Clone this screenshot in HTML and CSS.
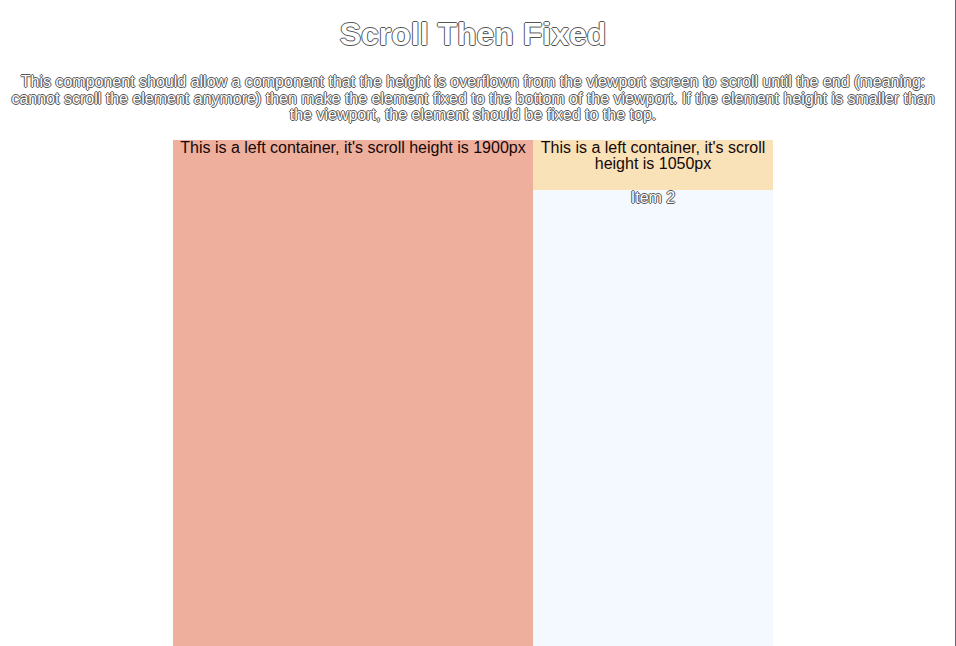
FILE: index.html
```html
<!DOCTYPE html>
<html>
<head>
<meta charset="utf-8">
<title>Scroll Then Fixed</title>
<link rel="stylesheet" href="styles.css">
</head>
<body>
<div class="frame">
  <div class="page">
    <h1 class="title outline">Scroll Then Fixed</h1>
    <p class="desc outline">This component should allow a component that the height is overflown from the viewport screen to scroll until the end (meaning: cannot scroll the element anymore) then make the element fixed to the bottom of the viewport. If the element height is smaller than the viewport, the element should be fixed to the top.</p>
    <div class="columns">
      <div class="left">This is a left container, it's scroll height is 1900px</div>
      <div class="right">
        <div class="right-head">This is a left container, it's scroll height is 1050px</div>
        <div class="right-item outline">Item 2</div>
      </div>
    </div>
  </div>
  <div class="edge"></div>
</div>
</body>
</html>
```

FILE: styles.css
```css
html, body {
  margin: 0;
  padding: 0;
  background: #fff;
}
body {
  font-family: "Liberation Sans", Arial, Helvetica, sans-serif;
}
.frame {
  display: flex;
  height: 646px;
  overflow: hidden;
}
.page {
  flex: 0 0 946px;
  text-align: center;
}
.edge {
  flex: 0 0 9px;
  border-right: 1px solid #6a6470;
}
.outline {
  color: #fff;
  text-shadow:
    -1px 0 0 #555, 1px 0 0 #555, 0 -1px 0 #555, 0 1px 0 #555;
}
.title {
  font-size: 32px;
  font-weight: bold;
  margin: 16px 0 0;
  line-height: 36px;
}
.desc {
  font-size: 16px;
  line-height: 16.5px;
  margin: 22px 8px 0;
}
.columns {
  display: flex;
  justify-content: center;
  margin-top: 16px;
}
.left {
  width: 360px;
  height: 1900px;
  background: #efaf9d;
  color: #150808;
  font-size: 16px;
  line-height: 16px;
}
.right {
  width: 240px;
  height: 1050px;
  background: #f3f9fe;
  display: flex;
  flex-direction: column;
}
.right-head {
  background: #f9e2b8;
  height: 50px;
  color: #150808;
  font-size: 16px;
  line-height: 16.5px;
  padding: 0 6px;
}
.right-item {
  font-size: 16px;
  line-height: 15px;
}
```
